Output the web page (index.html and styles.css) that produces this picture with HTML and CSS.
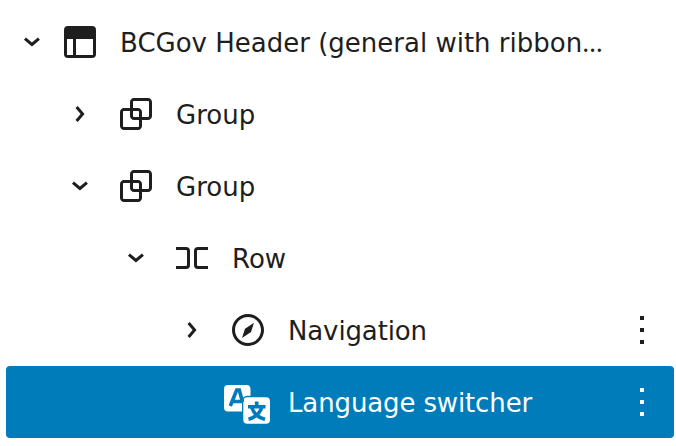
FILE: index.html
```html
<!DOCTYPE html>
<html lang="en">
<head>
<meta charset="utf-8">
<title>List view</title>
<link rel="stylesheet" href="styles.css">
</head>
<body>
<svg class="defs" aria-hidden="true">
  <symbol id="chevron" viewBox="0 0 24 24"><path d="M10.8622 8.04053L14.2805 12.0286L10.8622 16.0167L9.72327 15.0405L12.3049 12.0286L9.72327 9.01672L10.8622 8.04053Z"/></symbol>
  <symbol id="header" viewBox="0 0 24 24"><path d="M18.5 10.500H10v8h8.500v-8zm-10 0h-3v8h3v-8zM6 4h12a2 2 0 012 2v12a2 2 0 01-2 2H6a2 2 0 01-2-2V6a2 2 0 012-2z"/></symbol>
  <symbol id="group" viewBox="0 0 24 24"><path d="M18 4h-7c-1.1 0-2 .9-2 2v3H6c-1.1 0-2 .9-2 2v7c0 1.1.9 2 2 2h7c1.1 0 2-.9 2-2v-3h3c1.1 0 2-.9 2-2V6c0-1.1-.9-2-2-2zm-4.5 14c0 .3-.2.5-.5.5H6c-.3 0-.5-.2-.5-.5v-7c0-.3.2-.5.5-.5h3V13c0 1.1.9 2 2 2h2.5v3zm0-4.5H11c-.3 0-.5-.2-.5-.5v-2.5H13c.3 0 .5.2.5.5v2.5zm5-.5c0 .3-.2.5-.5.5h-3V11c0-1.1-.9-2-2-2h-2.5V6c0-.3.2-.5.5-.5h7c.3 0 .5.2.5.5v7z"/></symbol>
  <symbol id="row" viewBox="0 0 24 24"><path d="M4 6.5h5a2 2 0 0 1 2 2v7a2 2 0 0 1-2 2H4V16h5a.5.5 0 0 0 .5-.5v-7A.5.5 0 0 0 9 8H4V6.5Zm16 0h-5a2 2 0 0 0-2 2v7a2 2 0 0 0 2 2h5V16h-5a.5.5 0 0 1-.5-.5v-7A.5.5 0 0 1 15 8h5V6.5Z"/></symbol>
  <symbol id="navigation" viewBox="0 0 24 24"><path d="M12 4c-4.4 0-8 3.6-8 8s3.6 8 8 8 8-3.6 8-8-3.6-8-8-8zm0 14.5c-3.6 0-6.5-2.9-6.5-6.5S8.4 5.5 12 5.5s6.5 2.9 6.5 6.5-2.9 6.5-6.5 6.5zM9 16l4.5-3L15 8.4l-4.5 3L9 16z"/></symbol>
  <symbol id="more" viewBox="0 0 24 24"><path d="M13 19h-2v-2h2v2zm0-6h-2v-2h2v2zm0-6h-2V5h2v2z"/></symbol>
  <symbol id="language" viewBox="0 0 48 48">
    <path d="M4 7h18.500a4 4 0 0 1 4 4v6.800h-3.300a5.200 5.200 0 0 0-5.200 5.200v10.500H4a4 4 0 0 1-4-4V11a4 4 0 0 1 4-4z"/>
    <rect x="19.300" y="19.200" width="26.700" height="26.500" rx="4"/>
    <path class="cut" d="M6.300 28L12.700 12H15.300L18.500 24M9 23.500H18"/>
    <path class="cut" d="M32.700 23.500V28M24 28.700H41.500M27.500 29C29.500 35 34 39.500 41 41.200M38 29C36 35 31.500 39.500 24.500 41.200"/>
  </symbol>
</svg>
<main class="tree">
  <div class="item level-1">
    <svg class="icon chevron open"><use href="#chevron"/></svg>
    <svg class="icon"><use href="#header"/></svg>
    <span class="label">BCGov Header (general with ribbon<span class="ellipsis">…</span></span>
  </div>
  <div class="item level-2">
    <svg class="icon chevron"><use href="#chevron"/></svg>
    <svg class="icon"><use href="#group"/></svg>
    <span class="label">Group</span>
  </div>
  <div class="item level-2">
    <svg class="icon chevron open"><use href="#chevron"/></svg>
    <svg class="icon"><use href="#group"/></svg>
    <span class="label">Group</span>
  </div>
  <div class="item level-3">
    <svg class="icon chevron open"><use href="#chevron"/></svg>
    <svg class="icon"><use href="#row"/></svg>
    <span class="label">Row</span>
  </div>
  <div class="item level-4">
    <svg class="icon chevron"><use href="#chevron"/></svg>
    <svg class="icon"><use href="#navigation"/></svg>
    <span class="label">Navigation</span>
    <svg class="icon more"><use href="#more"/></svg>
  </div>
  <div class="item level-4 selected">
    <span class="icon chevron"></span>
    <svg class="icon"><use href="#language"/></svg>
    <span class="label">Language switcher</span>
    <svg class="icon more"><use href="#more"/></svg>
  </div>
</main>
</body>
</html>
```
FILE: styles.css
```css
body {
  margin: 0;
  background: #fff;
  color: #1e1e1e;
  font: 26px/72px "DejaVu Sans", Verdana, sans-serif;
}

.defs {
  display: none;
}

.tree {
  padding: 6px 2px 8px 6px;
}

.item {
  display: flex;
  align-items: center;
  height: 72px;
  padding-right: 8px;
  border-radius: 4px;
}

.level-1 { padding-left: 2px; }
.level-2 { padding-left: 50px; }
.level-3 { padding-left: 106px; }
.level-4 { padding-left: 162px; letter-spacing: -0.13px; }

.icon {
  flex: none;
  width: 48px;
  height: 48px;
  fill: currentColor;
}

.chevron {
  margin-right: 8px;
}

.level-1 .chevron {
  margin-right: 0;
}

.open {
  transform: rotate(90deg);
}

.label {
  margin-left: 16px;
  padding-top: 2px;
  white-space: nowrap;
}

.ellipsis {
  font-family: "Noto Sans", sans-serif;
  line-height: 1;
}

.more {
  margin-left: auto;
}

.selected {
  background: #007cba;
  color: #fff;
}

.cut {
  fill: none;
  stroke: #007cba;
  stroke-width: 3.6;
}
```
